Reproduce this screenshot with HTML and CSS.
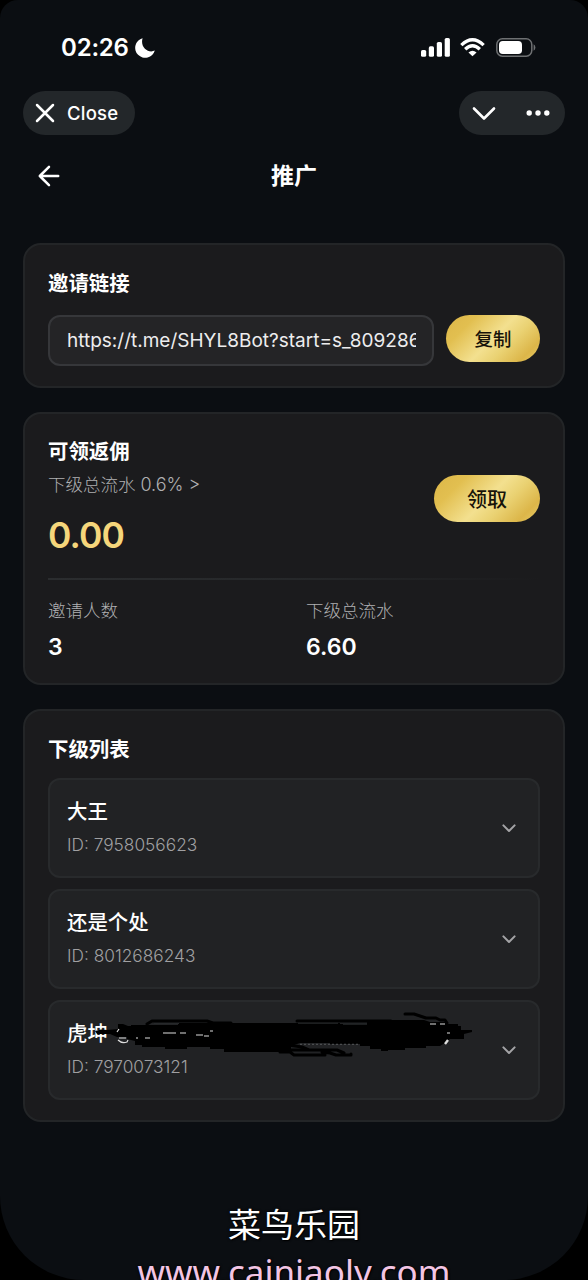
FILE: index.html
```html
<!DOCTYPE html>
<html lang="zh-CN">
<head>
<meta charset="utf-8">
<title>推广</title>
<link rel="stylesheet" href="styles.css">
</head>
<body>
<div class="screen">
  <header class="status">
    <div class="clock"><span>02:26</span>
      <svg class="moon" width="20" height="20" viewBox="0 0 20 20"><path d="M7.6.2A10 10 0 1 0 19.8 12.6C13.5 15.6 4.8 9.8 7.6.2Z" fill="#fff"/></svg>
    </div>
    <div class="indicators">
      <svg width="29" height="19" viewBox="0 0 29 19" fill="#fff"><rect x="0" y="12" width="5.2" height="6.8" rx="1.6"/><rect x="7.8" y="8.3" width="5.2" height="10.5" rx="1.6"/><rect x="15.8" y="4" width="5.2" height="14.8" rx="1.6"/><rect x="23.7" y="0" width="5.2" height="18.8" rx="1.6"/></svg>
      <svg class="wifi" width="25" height="19" viewBox="0 0 26 19"><g fill="none" stroke="#fff" stroke-width="3.5"><path d="M1.4 7Q13-4 24.6 7"/><path d="M5.4 11.3Q13 4.2 20.6 11.3"/></g><path d="M8.8 14.6Q13 11.2 17.2 14.6L13 18.7Z" fill="#fff"/></svg>
      <svg class="battery" width="40" height="19" viewBox="0 0 40 19"><rect x=".8" y=".8" width="35" height="17.4" rx="5.6" fill="none" stroke="#6e7072" stroke-width="1.5"/><rect x="3" y="3" width="23" height="13" rx="3.8" fill="#fff"/><path d="M37.6 6.3Q39.4 7.2 39.4 9.5T37.6 12.7Z" fill="#6e7072"/></svg>
    </div>
  </header>

  <div class="controls">
    <div class="pill close"><svg width="20" height="20" viewBox="0 0 20 20"><path d="M2 2 18 18M18 2 2 18" stroke="#fff" stroke-width="2.5" stroke-linecap="round"/></svg><span>Close</span></div>
    <div class="pill menu"><svg width="24" height="15" viewBox="0 0 24 15"><path d="m2 2.5 10 10 10-10" fill="none" stroke="#fff" stroke-width="2.6" stroke-linecap="round" stroke-linejoin="round"/></svg><svg width="24" height="6" viewBox="0 0 24 6" fill="#fff"><circle cx="3.2" cy="3" r="2.7"/><circle cx="12" cy="3" r="2.7"/><circle cx="20.8" cy="3" r="2.7"/></svg></div>
  </div>

  <div class="titlebar">
    <svg width="22" height="22" viewBox="0 0 22 22"><path d="M11 1.8 1.8 11l9.2 9.2M1.8 11h18.4" fill="none" stroke="#fff" stroke-width="2.5" stroke-linejoin="round" stroke-linecap="round"/></svg>
    <h1>推广</h1>
    <span></span>
  </div>

  <main>
    <section class="card invite">
      <h2>邀请链接</h2>
      <div class="link-row">
        <div class="link"><span>https://t.me/SHYL8Bot?start=s_809286</span></div>
        <div class="gold copy">复制</div>
      </div>
    </section>

    <section class="card rebate">
      <div class="rebate-top">
        <div>
          <h2>可领返佣</h2>
          <p class="rate">下级总流水 <span>0.6% &gt;</span></p>
          <p class="amount">0.00</p>
        </div>
        <div class="gold claim">领取</div>
      </div>
      <div class="divider"></div>
      <div class="stats">
        <div><p class="label">邀请人数</p><p class="value">3</p></div>
        <div><p class="label">下级总流水</p><p class="value">6.60</p></div>
      </div>
    </section>

    <section class="card members">
      <h2>下级列表</h2>
      <div class="list">
        <div class="member"><div><p class="name">大王</p><p class="uid">ID: 7958056623</p></div><svg class="chev" width="14" height="9" viewBox="0 0 14 9"><path d="m1.4 1.4 5.6 5.6 5.6-5.6"/></svg></div>
        <div class="member"><div><p class="name">还是个处</p><p class="uid">ID: 8012686243</p></div><svg class="chev" width="14" height="9" viewBox="0 0 14 9"><path d="m1.4 1.4 5.6 5.6 5.6-5.6"/></svg></div>
        <div class="member"><div><p class="name">虎坤</p><p class="uid">ID: 7970073121</p></div><svg class="chev" width="14" height="9" viewBox="0 0 14 9"><path d="m1.4 1.4 5.6 5.6 5.6-5.6"/></svg>
          <svg class="scribble" width="390" height="50" viewBox="90 1008 390 50">
            <path d="M95 1031L101 1029.5L107 1030L118 1029V1024H123L128 1026H131V1025H178V1023H340V1024H367V1020H424L430 1022H446V1024H458V1026H461V1030H472V1032L464 1034V1039H450L445 1043L440 1046H426V1048H405V1050H388V1051H381V1049H370V1046H360V1044H330V1043H300L291 1046V1052H224V1049H210V1047H187V1049H165V1047H142V1045H135V1041L127 1039V1037H117L110 1034H97Z" fill="#000"/>
            <g fill="none" stroke="#000" stroke-width="3" stroke-linecap="round" stroke-linejoin="round"><path d="M147 1024 152 1021H207L213 1023H231M297 1021H391M405 1014H414L420 1016 426 1018H436L440 1020H445L447 1023M258 1048 276 1050H324M288 1045 302 1047 309 1050H337L344 1053M280 1052H290L294 1055H325M322 1052 330 1053 336 1055H351V1054"/></g>
            <path d="M154 1023.5h25M298 1023.3h40M343 1024.3h24" fill="none" stroke="#26282a" stroke-width="1.1"/>
            <path d="M300 1044.3h60" fill="none" stroke="#4a4c4e" stroke-width="1.2" stroke-dasharray="2 2"/>
            <g fill="none" stroke="#ddd" stroke-width="1.2"><path d="m119 1029-2 3M118 1040q4 4 9 2l1-2M126 1038h-7M136 1038h2M145 1038h5M163 1033h13M180 1033h6M196 1035h7M204 1036h5M210 1031h3M430 1024h6M440 1024h5M447 1033h3"/><path d="m448 1040-3 4" stroke-width="2.4"/></g>
          </svg>
        </div>
      </div>
    </section>
  </main>

  <footer><div class="brand">菜鸟乐园</div><div class="site">www.cainiaoly.com</div></footer>
</div>
</body>
</html>
```
FILE: styles.css
```css
* { box-sizing: border-box; }
body { margin: 0; background: #000; }
p, h1, h2 { margin: 0; }
svg { display: block; flex: none; }

.screen {
  width: 588px;
  height: 1280px;
  overflow: hidden;
  border-radius: 18px 18px 84px 84px;
  background: #0b0e12;
  color: #fff;
  font-family: Inter, "Noto Sans CJK SC", sans-serif;
}

.status { height: 91px; display: flex; justify-content: space-between; align-items: flex-start; padding: 33px 52px 0 61px; }
.clock { display: flex; align-items: center; gap: 6px; font-size: 24px; font-weight: 600; line-height: 30px; letter-spacing: -.2px; }
.clock span { width: 68px; white-space: nowrap; }
.indicators { display: flex; align-items: center; padding-top: 5px; }
.wifi { margin-left: 10px; }
.battery { margin-left: 11px; }

.controls { display: flex; justify-content: space-between; padding: 0 23px; }
.pill { height: 44px; border-radius: 22px; background: #23272a; display: flex; align-items: center; }
.close { width: 112px; padding-left: 12px; gap: 12px; font-size: 18.5px; font-weight: 550; letter-spacing: .2px; }
.menu { width: 106px; padding: 0 15px 0 13px; justify-content: space-between; }

.titlebar { height: 108px; display: flex; align-items: flex-start; justify-content: space-between; padding: 30px 38px 0; }
.titlebar span { width: 22px; }
.titlebar h1 { font-size: 23px; font-weight: 600; line-height: 22px; }

main { display: flex; flex-direction: column; gap: 24px; padding: 0 23px; }
.card { border: 2px solid #232527; border-radius: 18px; background: #1b1b1d; padding: 0 23px; }
.card h2 { font-size: 20.4px; font-weight: 600; line-height: 30px; }

.invite { height: 145px; padding-top: 24px; }
.link-row { display: flex; gap: 12px; margin-top: 16px; }
.link { width: 386px; height: 51px; border: 2px solid #36373a; border-radius: 12px; background: #242426; padding: 0 16px 0 17px; display: flex; align-items: center; }
.link span { overflow: hidden; white-space: nowrap; font-size: 19px; line-height: 30px; color: #ededee; }
.gold { height: 47px; border-radius: 24px; display: flex; align-items: center; justify-content: center; color: #171309; font-weight: 500; background: linear-gradient(135deg, #dcb648 0%, #e2bf50 22%, #f3e08f 50%, #ead273 65%, #dcb649 85%, #e7cb68 100%); }
.copy { width: 94px; padding-bottom: 1px; font-size: 18.4px; }
.claim { width: 106px; font-size: 20px; padding-bottom: 1px; margin-top: 38px; }

.rebate { height: 273px; padding-top: 23px; }
.rebate-top { display: flex; justify-content: space-between; height: 141px; }
.rate { font-size: 17.5px; line-height: 24px; margin-top: 6px; color: #b0b0b2; font-weight: 300; }
.rate span { font-size: 18px; }
.amount { font-size: 35.5px; font-weight: 600; line-height: 44px; margin-top: 17px; color: #f5d67b; letter-spacing: -.9px; }
.divider { height: 2px; background: linear-gradient(90deg, #2b2d2f, #26282a 50%, #1b1b1d); }
.stats { display: grid; grid-template-columns: 258px 1fr; padding-top: 18px; }
.label { font-size: 17.5px; line-height: 26px; color: #b0b0b2; font-weight: 300; }
.value { font-size: 23px; font-weight: 600; line-height: 30px; margin-top: 8px; }

.members { height: 413px; padding-top: 24px; }
.list { display: flex; flex-direction: column; gap: 11px; margin-top: 13px; }
.member { position: relative; height: 100px; border: 2px solid #282a2c; border-radius: 12px; background: #212224; padding: 17px 22px 0 17px; display: flex; justify-content: space-between; }
.name { font-size: 20.4px; font-weight: 500; line-height: 30px; }
.uid { font-size: 17.3px; line-height: 24px; margin-top: 6px; color: #a0a0a2; font-weight: 300; }
.chev { margin-top: 27px; fill: none; stroke: #a4a4a6; stroke-width: 2; stroke-linecap: round; stroke-linejoin: round; }
.scribble { position: absolute; left: 40px; top: 6px; }

footer { text-align: center; padding-top: 76px; text-shadow: 0 0 3px #000, 1px 1px 1px #000; }
.brand { font-family: "Noto Sans CJK SC", sans-serif; font-size: 33px; line-height: 50px; }
.site { font-family: "Noto Sans", sans-serif; font-size: 35px; line-height: 48px; color: #f3c5e4; }
```
